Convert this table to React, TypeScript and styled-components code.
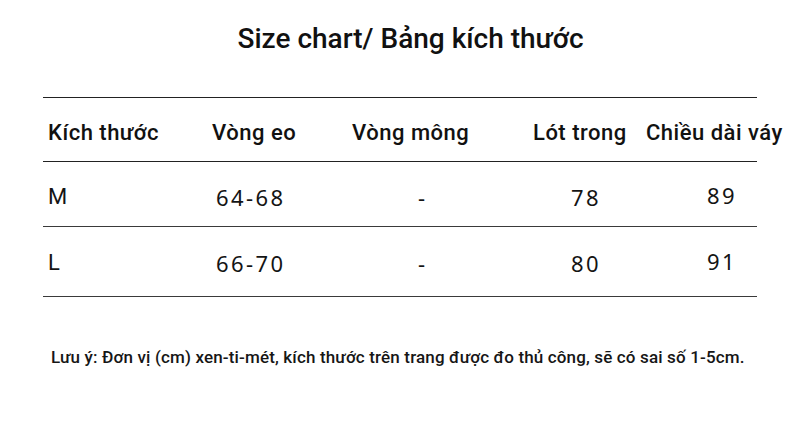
import styled, { createGlobalStyle } from "styled-components"

const GlobalStyle = createGlobalStyle`
  html, body {
    margin: 0;
    padding: 0;
    background: #ffffff;
  }
`

const headers = ["Kích thước", "Vòng eo", "Vòng mông", "Lót trong", "Chiều dài váy"]

// indent of each data column relative to its header
const indents = [0, 4, 66, 38, 61]

const rows = [
  ["M", "64-68", "-", "78", "89"],
  ["L", "66-70", "-", "80", "91"],
]

export default function App() {
  return (
    <Page>
      <GlobalStyle />
      <Title>Size chart/ Bảng kích thước</Title>
      <Table>
        <HeaderRow>
          {headers.map((h) => (
            <HeadCell key={h}>{h}</HeadCell>
          ))}
        </HeaderRow>
        {rows.map((row, i) => (
          <DataRow key={row[0]} $last={i === rows.length - 1}>
            {row.map((v, j) => (
              <DataCell
                key={j}
                $indent={indents[j]}
                $label={j === 0}
                $raise={j === row.length - 1}
              >
                {v}
              </DataCell>
            ))}
          </DataRow>
        ))}
      </Table>
      <Note>
        Lưu ý: Đơn vị (cm) xen-ti-mét, kích thước trên trang được đo thủ công, sẽ có sai số 1-5cm.
      </Note>
    </Page>
  )
}

const Page = styled.div`
  width: 800px;
  height: 446px;
  background: #ffffff;
  color: #141414;
  font-family: Roboto, "Noto Sans", sans-serif;
  padding-top: 22px;
  box-sizing: border-box;
  overflow: hidden;
`

const Title = styled.div`
  font-size: 28px;
  line-height: 34px;
  font-weight: 500;
  text-align: center;
  padding-left: 21px;
  color: #111111;
`

const Table = styled.div`
  margin: 41px 43px 0 43px;
  border-top: 1.5px solid #222222;
`

const gridCols = `164px 140px 181px 113px 1fr`

const HeaderRow = styled.div`
  display: grid;
  grid-template-columns: ${gridCols};
  padding: 23px 0 16px 5px;
  border-bottom: 1.5px solid #222222;
`

const HeadCell = styled.div`
  font-size: 22px;
  font-weight: 500;
  letter-spacing: 0.5px;
  line-height: 24px;
  white-space: nowrap;
  color: #111111;
`

const DataRow = styled.div<{ $last?: boolean }>`
  display: grid;
  grid-template-columns: ${gridCols};
  padding: ${(p) => (p.$last ? "24px 0 21px 5px" : "23px 0 17px 5px")};
  border-bottom: 1.5px solid #3a3a3a;
`

const DataCell = styled.div<{ $indent: number; $label?: boolean; $raise?: boolean }>`
  padding-left: ${(p) => p.$indent}px;
  font-family: ${(p) => (p.$label ? `Roboto, sans-serif` : `"Noto Sans", sans-serif`)};
  font-size: 22px;
  line-height: 24px;
  letter-spacing: ${(p) => (p.$label ? "0" : "2.4px")};
  white-space: nowrap;
  color: #141414;
  transform: ${(p) => (p.$raise ? "translateY(-2px)" : "none")};
`

const Note = styled.div`
  margin-top: 50px;
  padding-left: 51px;
  font-size: 17px;
  font-weight: 500;
  letter-spacing: 0.15px;
  line-height: 20px;
  color: #161616;
  white-space: nowrap;
`
